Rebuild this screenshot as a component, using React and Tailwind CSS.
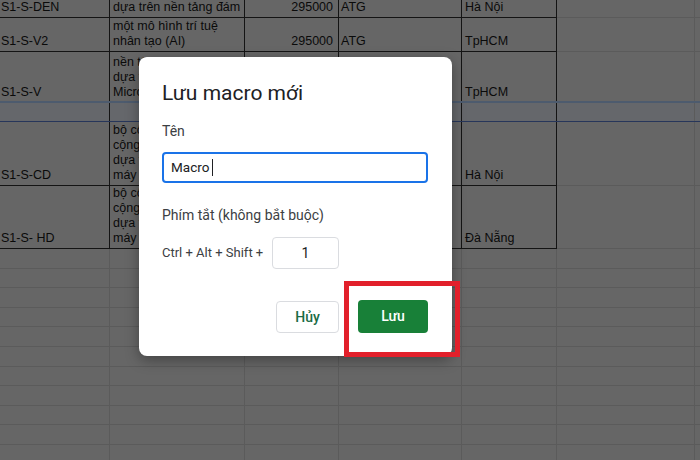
import React from "react";

const cA = "w-[110px] shrink-0 h-full border-r border-b border-[#141414] flex flex-col justify-end pb-[2px] pl-[1px] overflow-hidden";
const cB = "w-[135px] shrink-0 h-full border-r border-b border-[#141414] flex flex-col justify-end pb-[2px] pl-[3px] overflow-hidden";
const cC = "w-[94px] shrink-0 h-full border-r border-b border-[#141414] flex flex-col justify-end items-end pb-[2px] pr-[5px] overflow-hidden";
const cD = "w-[123px] shrink-0 h-full border-r border-b border-[#141414] flex flex-col justify-end pb-[2px] pl-[2px] overflow-hidden";
const cE = "w-[95px] shrink-0 h-full border-r border-b border-[#141414] flex flex-col justify-end pb-[2px] pl-[3px] overflow-hidden";
const cF = "w-[138px] shrink-0 h-full border-r border-b border-[#5b5b5b]";
const cG = "flex-1 h-full border-b border-[#5b5b5b]";

const cA4 = "w-[110px] shrink-0 h-full border-r border-[#141414]";
const cB4 = "w-[135px] shrink-0 h-full border-r border-[#141414]";
const cC4 = "w-[94px] shrink-0 h-full border-r border-[#141414]";
const cD4 = "w-[123px] shrink-0 h-full border-r border-[#141414]";
const cE4 = "w-[95px] shrink-0 h-full border-r border-[#141414]";
const cF4 = "w-[138px] shrink-0 h-full border-r border-[#5b5b5b]";

const eA = "w-[110px] shrink-0 h-full border-r border-b border-[#5b5b5b]";
const eB = "w-[135px] shrink-0 h-full border-r border-b border-[#5b5b5b]";
const eC = "w-[94px] shrink-0 h-full border-r border-b border-[#5b5b5b]";
const eD = "w-[123px] shrink-0 h-full border-r border-b border-[#5b5b5b]";
const eE = "w-[95px] shrink-0 h-full border-r border-b border-[#5b5b5b]";

const L = ({ children }) => (
  <div className="leading-[15px] whitespace-nowrap">{children}</div>
);

function DataRow({ h, a, b, c, d, e }) {
  return (
    <div className={h}>
      <div className={cA}><L>{a}</L></div>
      <div className={cB}>{b.map((t, i) => <L key={i}>{t}</L>)}</div>
      <div className={cC}><L>{c}</L></div>
      <div className={cD}><L>{d}</L></div>
      <div className={cE}><L>{e}</L></div>
      <div className={cF} />
      <div className={cG} />
    </div>
  );
}

export default function App() {
  const empties = Array.from({ length: 11 });
  return (
    <div className="relative w-[700px] h-[460px] overflow-hidden bg-[#666666]">
      <div className="flex flex-col font-['Liberation_Sans',Arial,sans-serif] text-[12.5px] text-[#0a0a0a]">
        <DataRow h="flex h-[18px]" a="S1-S-DEN" b={["dựa trên nền tảng đám"]} c="295000" d="ATG" e="Hà Nội" />
        <DataRow h="flex h-[34px]" a="S1-S-V2" b={["một mô hình trí tuệ", "nhân tạo (AI)"]} c="295000" d="ATG" e="TpHCM" />
        <div className="flex h-[49px]">
          <div className={cA4 + " flex flex-col justify-end pb-[1px] pl-[1px]"}><L>S1-S-V</L></div>
          <div className={cB4 + " flex flex-col justify-end pb-[1px] pl-[3px] overflow-hidden"}>
            <L>nền tảng đám mây</L>
            <L>dựa trên</L>
            <L>Microsoft Azure</L>
          </div>
          <div className={cC4} />
          <div className={cD4} />
          <div className={cE4 + " flex flex-col justify-end pb-[1px] pl-[3px]"}><L>TpHCM</L></div>
          <div className={cF4} />
          <div className="flex-1 h-full" />
        </div>
        <div className="flex h-[21px] bg-[#65676b] border-t-2 border-t-[#4d5b6e] border-b border-b-[#27365a]">
          <div className={cA4} />
          <div className={cB4} />
          <div className={cC4} />
          <div className={cD4} />
          <div className={cE4} />
          <div className={cF4} />
          <div className="flex-1 h-full" />
        </div>
        <DataRow h="flex h-[64px]" a="S1-S-CD" b={["bộ công cụ phân tích", "cộng tác thông minh", "dựa trên học", "máy sâu"]} c="" d="" e="Hà Nội" />
        <DataRow h="flex h-[63px]" a="S1-S- HD" b={["bộ công cụ phân tích", "cộng tác thông minh", "dựa trên học", "máy sâu"]} c="" d="" e="Đà Nẵng" />
        {empties.map((_, i) => (
          <div key={i} className="flex h-[19.6px] shrink-0">
            <div className={eA} />
            <div className={eB} />
            <div className={eC} />
            <div className={eD} />
            <div className={eE} />
            <div className={cF} />
            <div className={cG} />
          </div>
        ))}
      </div>

      {/* Dialog */}
      <div className="absolute left-[139px] top-[57px] w-[313px] h-[299px] bg-white rounded-[8px] shadow-[0_4px_14px_rgba(0,0,0,0.35)] pl-[23px] pr-[24px] pt-[22px] font-['Roboto',sans-serif] text-[#3c4043]">
        <div className="text-[21px] leading-[28px] text-[#202124]">Lưu macro mới</div>
        <div className="mt-[15px] text-[14px] leading-[18px]">Tên</div>
        <div className="mt-[12px] h-[31px] w-[266px] border-2 border-[#1a73e8] rounded-[4px] flex items-center pl-[7px] text-[13.5px] text-[#202124]">
          <span>Macro</span>
          <span className="ml-[3px] w-px h-[17px] bg-[#202124]" />
        </div>
        <div className="mt-[23px] text-[14px] leading-[18px]">Phím tắt (không bắt buộc)</div>
        <div className="mt-[13px] flex items-center">
          <span className="w-[110px] text-[13px] whitespace-nowrap">Ctrl + Alt + Shift +</span>
          <div className="w-[67px] h-[32px] border border-[#dadce0] rounded-[4px] flex items-center justify-center text-[14px] text-[#202124]">1</div>
        </div>
        <div className="mt-[31px] flex justify-end items-start gap-[19px]">
          <div className="mt-[1px] w-[63px] h-[32px] border border-[#dadce0] rounded-[4px] flex items-center justify-center text-[14px] font-medium text-[#1b6b45]">Hủy</div>
          <div className="w-[70px] h-[33px] bg-[#188038] rounded-[4px] flex items-center justify-center text-[14px] font-medium text-white">Lưu</div>
        </div>
      </div>

      {/* Annotation */}
      <div className="absolute left-[344px] top-[281px] w-[116px] h-[76px] border-[5px] border-[#e2202b]" />
    </div>
  );
}
